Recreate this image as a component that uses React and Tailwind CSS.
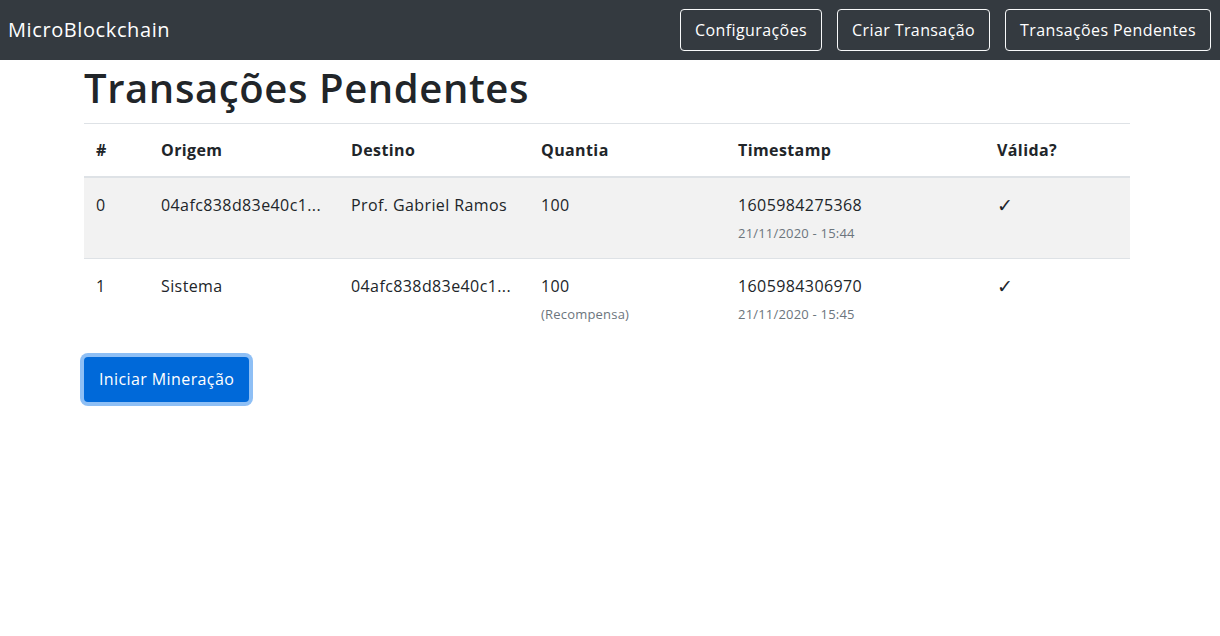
import React from 'react';

const rows = [
    { id: 0, from: '04afc838d83e40c1...', to: 'Prof. Gabriel Ramos', amount: '100', note: null, ts: '1605984275368', date: '21/11/2020 - 15:44', striped: true },
    { id: 1, from: 'Sistema', to: '04afc838d83e40c1...', amount: '100', note: '(Recompensa)', ts: '1605984306970', date: '21/11/2020 - 15:45', striped: false },
];

const NavButton = ({ children }) => (
    <button className="h-[42px] px-[14px] border border-[#f8f9fa] rounded-[4px] text-white text-[16px] leading-[24px]">
        {children}
    </button>
);

const App = () => {
    return (
        <div className="min-h-screen bg-white text-[#212529] font-['Open_Sans',sans-serif] tracking-[0.4px]">
            {/* Navbar */}
            <nav className="h-[60px] bg-[#343a40] flex items-center justify-between pl-[8px] pr-[9px]">
                <span className="text-white text-[20px] leading-[30px] tracking-[0.6px]">MicroBlockchain</span>
                <div className="flex gap-[15px]">
                    <NavButton>Configurações</NavButton>
                    <NavButton>Criar Transação</NavButton>
                    <NavButton>Transações Pendentes</NavButton>
                </div>
            </nav>

            <div className="ml-[84px] w-[1046px]">
                <h1 className="mt-[4px] mb-[11px] text-[40px] leading-[48px] font-semibold tracking-[0.6px]">Transações Pendentes</h1>

                <table className="w-full border-collapse text-[16px]">
                    <colgroup>
                        <col className="w-[65px]" />
                        <col className="w-[190px]" />
                        <col className="w-[190px]" />
                        <col className="w-[197px]" />
                        <col className="w-[259px]" />
                        <col />
                    </colgroup>
                    <thead>
                        <tr className="border-t border-[#dee2e6] border-b-2">
                            <th className="h-[53px] px-[12px] text-left font-bold align-middle">#</th>
                            <th className="h-[53px] px-[12px] text-left font-bold align-middle">Origem</th>
                            <th className="h-[53px] px-[12px] text-left font-bold align-middle">Destino</th>
                            <th className="h-[53px] px-[12px] text-left font-bold align-middle">Quantia</th>
                            <th className="h-[53px] px-[12px] text-left font-bold align-middle">Timestamp</th>
                            <th className="h-[53px] px-[12px] text-left font-bold align-middle">Válida?</th>
                        </tr>
                    </thead>
                    <tbody>
                        {rows.map((r) => (
                            <tr key={r.id} className={(r.striped ? 'bg-[#f2f2f2] ' : '') + 'border-b border-[#dee2e6] last:border-b-0'}>
                                <td className="px-[12px] py-[15px] align-top leading-[24px] h-[80px]">{r.id}</td>
                                <td className="px-[12px] py-[15px] align-top leading-[24px]">{r.from}</td>
                                <td className="px-[12px] py-[15px] align-top leading-[24px]">{r.to}</td>
                                <td className="px-[12px] py-[15px] align-top leading-[24px]">
                                    <div>{r.amount}</div>
                                    {r.note && <div className="mt-[6px] text-[13px] leading-[20px] text-[#6c757d] tracking-[0.2px]">{r.note}</div>}
                                </td>
                                <td className="px-[12px] py-[15px] align-top leading-[24px]">
                                    <div>{r.ts}</div>
                                    <div className="mt-[6px] text-[13px] leading-[20px] text-[#6c757d] tracking-[0.2px]">{r.date}</div>
                                </td>
                                <td className="px-[12px] py-[15px] align-top leading-[24px] text-[19px] font-extralight font-['DejaVu_Sans',sans-serif]">✓</td>
                            </tr>
                        ))}
                    </tbody>
                </table>

                <button className="mt-[18px] h-[45px] px-[15px] bg-[#0069d9] text-white text-[16px] rounded-[4px] ring-4 ring-[#8ebff5]">
                    Iniciar Mineração
                </button>
            </div>
        </div>
    );
};

export default App;
